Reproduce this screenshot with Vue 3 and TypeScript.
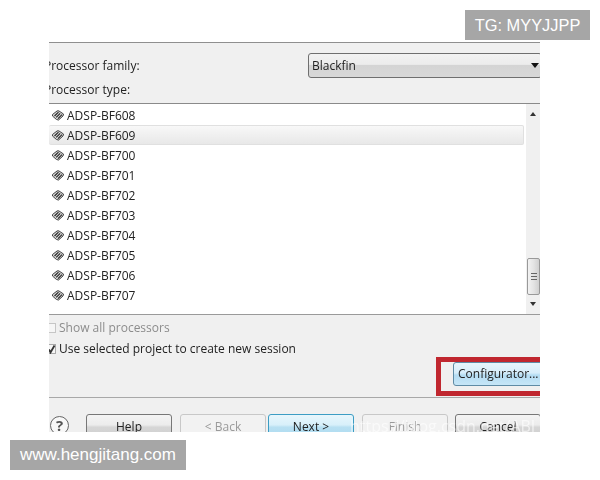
<script setup lang="ts">
const processors: string[] = ['ADSP-BF608','ADSP-BF609','ADSP-BF700','ADSP-BF701','ADSP-BF702','ADSP-BF703','ADSP-BF704','ADSP-BF705','ADSP-BF706','ADSP-BF707']
const selected = 'ADSP-BF609'
</script>

<template>
  <div class="page">
    <div class="dialog">
      <div class="top">
        <div class="family-row">
          <span class="label">Processor family:</span>
          <div class="combo"><span>Blackfin</span><i class="arrow"></i></div>
        </div>
        <div class="label type-label">Processor type:</div>
      </div>
      <div class="listbox">
        <ul class="list">
          <li v-for="p in processors" :key="p" :class="{ sel: p === selected }">
            <svg width="12" height="11" viewBox="0 0 12 11" class="chip">
              <path d="M0.5 4.5 L5 1 Q6 0.5 7 1 L11.5 4 L11 6 L6.5 10 L4.5 9.5 L0.5 6 Z" fill="#d6d6d6" stroke="#444" stroke-width="1"/>
              <path d="M2.5 6 L6.5 2.2 M4.2 7.4 L8.2 3.4 M6 8.6 L10 4.6" stroke="#222" stroke-width="1.1" fill="none"/>
            </svg>
            <span>{{ p }}</span>
          </li>
        </ul>
        <div class="scrollbar">
          <i class="up"></i>
          <div class="thumb"><b></b><b></b><b></b></div>
          <i class="down"></i>
        </div>
      </div>
      <div class="options">
        <label class="check disabled"><i class="box"></i>Show all processors</label>
        <label class="check"><i class="box"><svg width="9" height="10" viewBox="0 0 9 10"><path d="M2 5.5 L3.5 8.5 L7.5 1.5" stroke="#333" stroke-width="1.8" fill="none"/></svg></i>Use selected project to create new session</label>
        <div class="config-row">
          <div class="redbox"><div class="btn config">Configurator...</div></div>
        </div>
      </div>
      <div class="footer">
        <div class="help-icon">?</div>
        <div class="btn wide help">Help</div>
        <div class="btn wide off back">&lt; Back</div>
        <div class="btn wide next">Next &gt;</div>
        <div class="btn wide off finish">Finish</div>
        <div class="btn wide cancel">Cancel</div>
      </div>
      <div class="csdn">https://blog.csdn.net/ABI_OR</div>
    </div>
    <div class="tag tg">TG: MYYJJPP</div>
    <div class="tag site">www.hengjitang.com</div>
  </div>
</template>

<style>
html, body { margin: 0; background: #fff; }
</style>

<style scoped>
.page { position: relative; width: 600px; height: 480px; overflow: hidden; background: #fff; font-family: "Open Sans", "Noto Sans", sans-serif; }
.dialog { position: absolute; left: 49px; top: 42px; width: 491px; height: 390px; overflow: hidden; background: #f0f0f0; border-top: 1px solid #8f8f8f; box-sizing: border-box; color: #222; font-size: 12px; filter: blur(0.35px); }
.top { height: 60px; }
.family-row { display: flex; justify-content: space-between; align-items: flex-start; padding-top: 10px; margin-left: -5px; }
.label { line-height: 25px; }
.combo { width: 234px; height: 25px; margin-right: -2px; box-sizing: border-box; border: 1px solid #6f6f6f; border-radius: 3px; background: linear-gradient(#f2f2f2 0, #ececec 45%, #d4d4d4 50%, #d8d8d8 100%); display: flex; align-items: center; justify-content: space-between; padding: 0 0 0 3px; }
.arrow { width: 0; height: 0; border: 4.5px solid transparent; border-top: 5px solid #111; border-bottom: 0; margin-right: 2px; }
.type-label { margin-left: -5px; line-height: 14px; margin-top: 5px; }
.listbox { display: flex; height: 212px; box-sizing: border-box; background: #fff; border-top: 1px solid #8a8a8a; border-bottom: 1px solid #9a9a9a; }
.list { flex: 1; margin: 0; padding: 1px 0 0; list-style: none; }
.list li { height: 20px; display: flex; align-items: center; gap: 3px; padding-left: 3px; box-sizing: border-box; line-height: 20px; }
.list li span { padding-top: 1px; }
.list li.sel { margin-right: 2px; background: linear-gradient(#f8f8f8, #e8e8e8); border: 1px solid #e0e0e0; border-left: 0; border-radius: 2px; }
.chip { flex: none; }
.scrollbar { position: relative; width: 15px; background: #f0f0f0; margin-right: -1px; }
.up, .down { position: absolute; left: 4px; width: 0; height: 0; border: 3.5px solid transparent; }
.up { top: 8px; border-bottom: 4px solid #333; border-top: 0; }
.down { bottom: 8px; border-top: 4px solid #333; border-bottom: 0; }
.thumb { position: absolute; left: 1px; top: 154px; width: 13px; height: 37px; box-sizing: border-box; border: 1px solid #999; border-radius: 2px; background: linear-gradient(90deg, #f2f2f2, #e4e4e4 50%, #d0d0d0); display: flex; flex-direction: column; justify-content: center; align-items: center; gap: 2px; }
.thumb b { width: 6px; height: 1px; background: #666; }
.options { height: 83px; border-bottom: 1px solid #a8a8a8; box-sizing: border-box; position: relative; padding-top: 2px; }
.check { display: flex; align-items: center; height: 21px; line-height: 21px; }
.check.disabled { color: #8c8c8c; }
.box { width: 9px; height: 10px; margin: 0 3px 0 -2px; flex: none; box-sizing: border-box; border: 1px solid #aaa; background: #f6f6f6; display: flex; align-items: center; justify-content: center; }
.disabled .box { border-color: #c6c6c6; }
.box svg { flex: none; }
.config-row { display: flex; justify-content: flex-end; margin-top: -2px; }
.redbox { width: 104px; height: 39px; box-sizing: border-box; border: 5px solid #c0272f; border-right: 0; padding-left: 12px; overflow: hidden; }
.btn { box-sizing: border-box; border: 1px solid #777; border-radius: 3px; text-align: center; background: linear-gradient(#f4f4f4, #ececec 45%, #d6d6d6 55%, #cfcfcf); }
.btn.config { height: 24px; width: 95px; border-color: #5f8ba5; line-height: 22px; text-align: left; padding-left: 4px; white-space: nowrap; background: linear-gradient(#e8f5fc, #d6edfa 45%, #b4dcf2 55%, #c6e6f7); }
.footer { display: flex; padding: 16px 0 0 1px; align-items: flex-start; position: relative; }
.help-icon { width: 19px; height: 19px; margin-top: 2px; box-sizing: border-box; border: 1.5px solid #666; border-radius: 50%; text-align: center; line-height: 16px; font-size: 15px; font-weight: 700; color: #555; background: #f8f8f8; flex: none; }
.wide { height: 24px; line-height: 23px; width: 86px; flex: none; }
.help { margin-left: 17px; }
.back { margin-left: 8px; }
.next { margin-left: 2px; border: 1.5px solid #3c9dc4; background: linear-gradient(#e8f6fc, #d8f0fa 45%, #b8e0f2 55%, #aedbf0); }
.finish { margin-left: 8px; }
.cancel { margin-left: 7px; }
.off { color: #9a9a9a; border-color: #c8c8c8; background: #f2f2f2; }
.csdn { position: absolute; left: 301px; top: 372px; color: rgba(255,255,255,0.62); font-size: 16px; white-space: nowrap; }
.tag { position: absolute; background: #a6a6a6; color: #fff; font-family: "Liberation Sans", Arial, sans-serif; display: flex; align-items: center; justify-content: center; height: 30px; white-space: nowrap; }
.tg { left: 465px; top: 10px; width: 125px; font-size: 16.4px; }
.site { left: 10px; top: 440px; width: 176px; font-size: 17px; }
</style>
